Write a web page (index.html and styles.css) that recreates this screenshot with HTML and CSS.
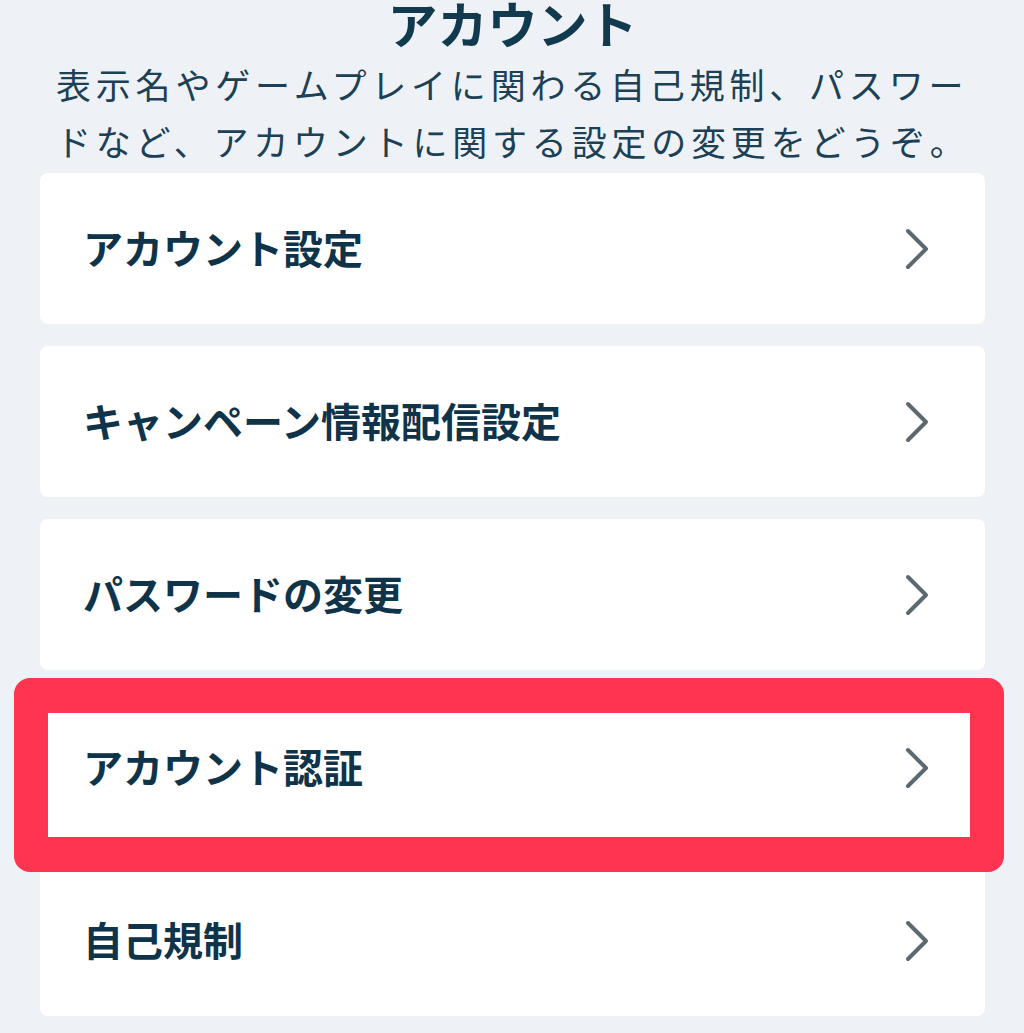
FILE: index.html
```html
<!DOCTYPE html>
<html lang="ja">
<head>
<meta charset="utf-8">
<title>アカウント</title>
<link rel="stylesheet" href="styles.css">
</head>
<body>
<main class="page">
  <h1 class="title">アカウント</h1>
  <p class="lead">表示名やゲームプレイに関わる自己規制、パスワー<br>ドなど、アカウントに関する設定の変更をどうぞ。</p>
  <ul class="menu">
    <li class="item"><span class="label">アカウント設定</span><svg class="chev" viewBox="0 0 24 42" width="24" height="42"><path d="M3 3 L21 21 L3 39"/></svg></li>
    <li class="item"><span class="label">キャンペーン情報配信設定</span><svg class="chev" viewBox="0 0 24 42" width="24" height="42"><path d="M3 3 L21 21 L3 39"/></svg></li>
    <li class="item"><span class="label">パスワードの変更</span><svg class="chev" viewBox="0 0 24 42" width="24" height="42"><path d="M3 3 L21 21 L3 39"/></svg></li>
    <li class="item highlight"><span class="label">アカウント認証</span><svg class="chev" viewBox="0 0 24 42" width="24" height="42"><path d="M3 3 L21 21 L3 39"/></svg></li>
    <li class="item"><span class="label">自己規制</span><svg class="chev" viewBox="0 0 24 42" width="24" height="42"><path d="M3 3 L21 21 L3 39"/></svg></li>
  </ul>
</main>
</body>
</html>
```
FILE: styles.css
```css
html, body {
  margin: 0;
  padding: 0;
  background: #eef2f6;
}
body {
  font-family: "Noto Sans CJK JP", "Noto Sans", sans-serif;
  color: #123a4f;
}
.page {
  padding: 0 39px 0 40px;
}
.title {
  margin: 0;
  font-size: 50px;
  line-height: 44px;
  font-weight: 700;
  text-align: center;
  color: #123a4f;
}
.lead {
  margin: 11px 0 0;
  padding-left: 16px;
  font-size: 35px;
  line-height: 57px;
  letter-spacing: 4.8px;
  font-weight: 400;
  color: #1c4055;
  white-space: nowrap;
}
.menu {
  list-style: none;
  margin: 4px 0 0;
  padding: 0;
  display: flex;
  flex-direction: column;
  gap: 22px;
}
.item {
  height: 151px;
  background: #ffffff;
  border-radius: 8px;
  display: flex;
  align-items: center;
  justify-content: space-between;
  padding: 0 56px 0 43px;
}
.label {
  font-size: 40px;
  font-weight: 700;
  color: #0f344a;
  margin-top: -4px;
}
.chev {
  display: block;
  fill: none;
  stroke: #5d6970;
  stroke-width: 4;
  stroke-linecap: round;
  stroke-linejoin: round;
}
.highlight {
  position: relative;
}
.highlight::after {
  content: "";
  position: absolute;
  left: -26px;
  top: -14px;
  right: -19px;
  bottom: -29px;
  border-style: solid;
  border-color: #ff3450;
  border-width: 35px 34px 35px 34px;
  border-radius: 16px;
  pointer-events: none;
}
```
